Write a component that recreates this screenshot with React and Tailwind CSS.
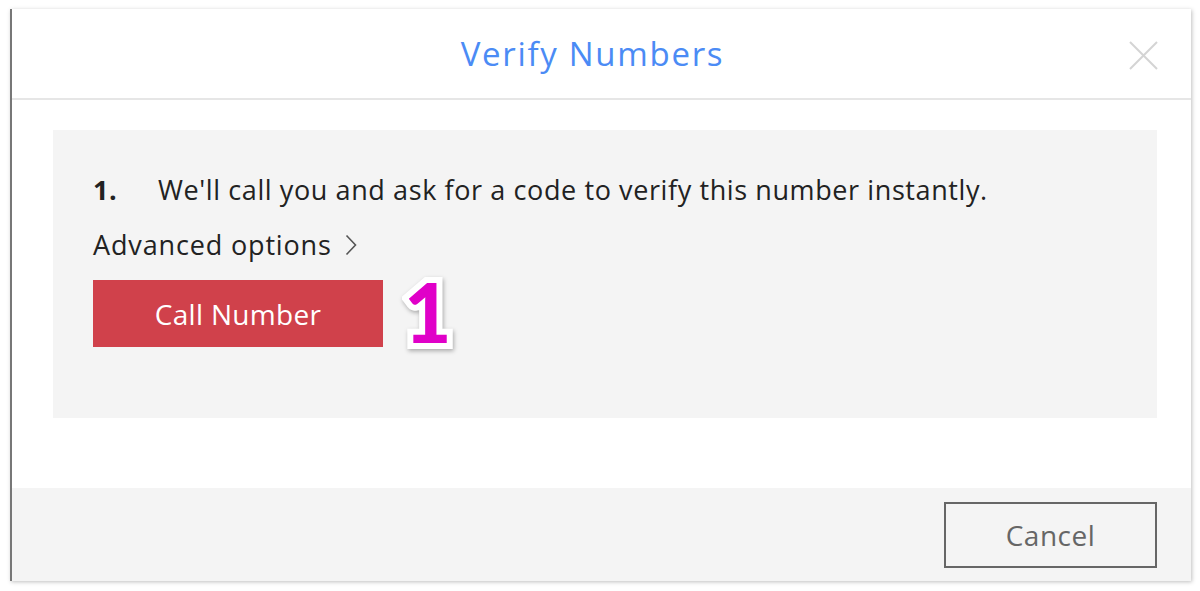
import React from 'react';

const font = { fontFamily: '"Open Sans", Lato, sans-serif' };

const CloseIcon = () => (
  <svg width="29" height="29" viewBox="0 0 29 29" fill="none">
    <path d="M1 1 L28 28 M28 1 L1 28" stroke="#d4d4d4" strokeWidth="2" />
  </svg>
);

export default function App() {
  return (
    <div className="min-h-[591px] bg-white pt-[9px] pl-[10px]" style={font}>
      <div className="w-[1181px] border-l-2 border-[#777] bg-white shadow-[1px_1px_4px_rgba(0,0,0,0.25)]">
        {/* Header */}
        <div className="relative flex h-[91px] items-center justify-center border-b-2 border-[#e6e6e6] pr-[18px]">
          <h2 className="text-[33px] tracking-[1.7px] text-[#4b8bf5] leading-none">Verify Numbers</h2>
          <button className="absolute right-[33px] top-[32px]">
            <CloseIcon />
          </button>
        </div>

        {/* Body */}
        <div className="pt-[30px] pb-[70px] pl-[41px] pr-[34px]">
          <div className="h-[288px] bg-[#f4f4f4] pl-[40px] pt-[46px]">
            <div className="flex items-center text-[27px] tracking-[0.6px] text-[#222] leading-none">
              <span className="w-[65px] font-bold">1.</span>
              <span>We'll call you and ask for a code to verify this number instantly.</span>
            </div>
            <div className="mt-[28px] flex items-center text-[27px] tracking-[0.85px] text-[#222] leading-none">
              Advanced options
              <svg className="ml-[13px]" width="12" height="22" viewBox="0 0 12 22" fill="none">
                <path d="M1.5 1.5 L10.5 11 L1.5 20.5" stroke="#555" strokeWidth="1.6" />
              </svg>
            </div>
            <div className="relative mt-[22px] flex items-center">
              <button className="flex h-[67px] w-[290px] items-center justify-center bg-[#d0414b] text-[28px] tracking-[0.3px] text-white">
                Call Number
              </button>
              <span
                className="absolute left-[311px] top-[-10px] text-[82px] font-black leading-none text-[#e000c8] [paint-order:stroke_fill] [-webkit-text-stroke:12px_white] drop-shadow-[1px_2px_2px_rgba(0,0,0,0.3)]"
                style={{ fontFamily: 'Lato, sans-serif' }}
              >
                1
              </span>
            </div>
          </div>
        </div>

        {/* Footer */}
        <div className="flex h-[93px] items-center justify-end bg-[#f4f4f4] pr-[34px]">
          <button className="flex h-[66px] w-[213px] items-center justify-center border-2 border-[#666] text-[28px] tracking-[0.5px] text-[#666]">
            Cancel
          </button>
        </div>
      </div>
    </div>
  );
}
